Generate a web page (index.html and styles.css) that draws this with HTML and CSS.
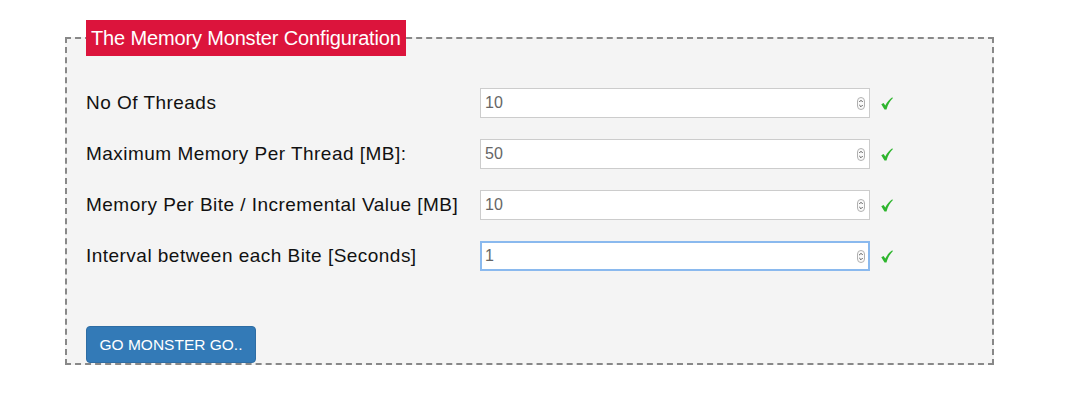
FILE: index.html
```html
<!DOCTYPE html>
<html>
<head>
<meta charset="utf-8">
<link rel="stylesheet" href="styles.css">
</head>
<body>
<form class="wrap">
  <fieldset class="config">
    <legend class="title">The Memory Monster Configuration</legend>
    <div class="rows">
      <div class="row">
        <label class="lbl">No Of Threads</label>
        <div class="field"><input class="inp" type="text" value="10"><span class="spin"><svg width="8" height="13" viewBox="0 0 8 13"><rect x="0.5" y="0.5" width="7" height="12" rx="3.5" fill="#fafafa" stroke="#b0b0b0"/><path d="M2.3 5 L4 3.3 L5.7 5" fill="none" stroke="#444" stroke-width="0.9"/><path d="M2.3 8 L4 9.7 L5.7 8" fill="none" stroke="#444" stroke-width="0.9"/></svg></span></div>
        <svg class="chk" width="12" height="13" viewBox="0 0 12 13"><path d="M0.3 7.2 L2.6 6 L4.3 8.6 C6 5.2 8.3 2.3 11.3 0.3 L11.8 1.2 C9.2 3.6 7 7.2 5.5 12.4 L3.5 12.6 Z" fill="#2db52d"/></svg>
      </div>
      <div class="row">
        <label class="lbl">Maximum Memory Per Thread [MB]:</label>
        <div class="field"><input class="inp" type="text" value="50"><span class="spin"><svg width="8" height="13" viewBox="0 0 8 13"><rect x="0.5" y="0.5" width="7" height="12" rx="3.5" fill="#fafafa" stroke="#b0b0b0"/><path d="M2.3 5 L4 3.3 L5.7 5" fill="none" stroke="#444" stroke-width="0.9"/><path d="M2.3 8 L4 9.7 L5.7 8" fill="none" stroke="#444" stroke-width="0.9"/></svg></span></div>
        <svg class="chk" width="12" height="13" viewBox="0 0 12 13"><path d="M0.3 7.2 L2.6 6 L4.3 8.6 C6 5.2 8.3 2.3 11.3 0.3 L11.8 1.2 C9.2 3.6 7 7.2 5.5 12.4 L3.5 12.6 Z" fill="#2db52d"/></svg>
      </div>
      <div class="row">
        <label class="lbl">Memory Per Bite / Incremental Value [MB]</label>
        <div class="field"><input class="inp" type="text" value="10"><span class="spin"><svg width="8" height="13" viewBox="0 0 8 13"><rect x="0.5" y="0.5" width="7" height="12" rx="3.5" fill="#fafafa" stroke="#b0b0b0"/><path d="M2.3 5 L4 3.3 L5.7 5" fill="none" stroke="#444" stroke-width="0.9"/><path d="M2.3 8 L4 9.7 L5.7 8" fill="none" stroke="#444" stroke-width="0.9"/></svg></span></div>
        <svg class="chk" width="12" height="13" viewBox="0 0 12 13"><path d="M0.3 7.2 L2.6 6 L4.3 8.6 C6 5.2 8.3 2.3 11.3 0.3 L11.8 1.2 C9.2 3.6 7 7.2 5.5 12.4 L3.5 12.6 Z" fill="#2db52d"/></svg>
      </div>
      <div class="row">
        <label class="lbl">Interval between each Bite [Seconds]</label>
        <div class="field"><input class="inp focus" type="text" value="1"><span class="spin"><svg width="8" height="13" viewBox="0 0 8 13"><rect x="0.5" y="0.5" width="7" height="12" rx="3.5" fill="#fafafa" stroke="#b0b0b0"/><path d="M2.3 5 L4 3.3 L5.7 5" fill="none" stroke="#444" stroke-width="0.9"/><path d="M2.3 8 L4 9.7 L5.7 8" fill="none" stroke="#444" stroke-width="0.9"/></svg></span></div>
        <svg class="chk" width="12" height="13" viewBox="0 0 12 13"><path d="M0.3 7.2 L2.6 6 L4.3 8.6 C6 5.2 8.3 2.3 11.3 0.3 L11.8 1.2 C9.2 3.6 7 7.2 5.5 12.4 L3.5 12.6 Z" fill="#2db52d"/></svg>
      </div>
    </div>
    <button class="go" type="button">GO MONSTER GO..</button>
  </fieldset>
</form>
</body>
</html>
```
FILE: styles.css
```css
html, body {
  margin: 0;
  padding: 0;
  background: #ffffff;
  font-family: "Liberation Sans", Arial, sans-serif;
}
.wrap {
  padding: 20px 0 0 65px;
}
.config {
  margin: 0;
  width: 929px;
  box-sizing: border-box;
  border: 2px dashed #888888;
  background: #f4f4f4;
  padding: 0 20px 0 19px;
}
.title {
  background: #dc143c;
  color: #ffffff;
  font-size: 20px;
  letter-spacing: -0.15px;
  line-height: 36px;
  height: 36px;
  padding: 0 5px;
  margin: 0;
}
.rows {
  display: flex;
  flex-direction: column;
  gap: 21px;
  padding-top: 32px;
}
.row {
  display: flex;
  align-items: center;
  height: 30px;
}
.lbl {
  width: 394px;
  font-size: 19px;
  letter-spacing: 0.47px;
  color: #111111;
  white-space: nowrap;
}
.field {
  position: relative;
  width: 390px;
  height: 30px;
}
.inp {
  width: 100%;
  height: 30px;
  box-sizing: border-box;
  border: 1px solid #cccccc;
  background: #ffffff;
  font-family: "Liberation Sans", Arial, sans-serif;
  font-size: 16px;
  color: #666666;
  padding: 0 0 0 4px;
  margin: 0;
  outline: none;
}
.inp.focus {
  border: 2px solid #8ab9ee;
  padding-left: 3px;
}
.spin {
  position: absolute;
  right: 5px;
  top: 9px;
  width: 8px;
  height: 13px;
  display: block;
}
.spin svg { display: block; }
.chk {
  margin-left: 11px;
  display: block;
}
.go {
  margin: 55px 0 0 0;
  display: block;
  width: 170px;
  height: 37px;
  background: #337ab7;
  color: #ffffff;
  border: 1px solid #2e6da4;
  border-radius: 4px;
  font-family: "Liberation Sans", Arial, sans-serif;
  font-size: 15.5px;
  padding: 0;
}
```
